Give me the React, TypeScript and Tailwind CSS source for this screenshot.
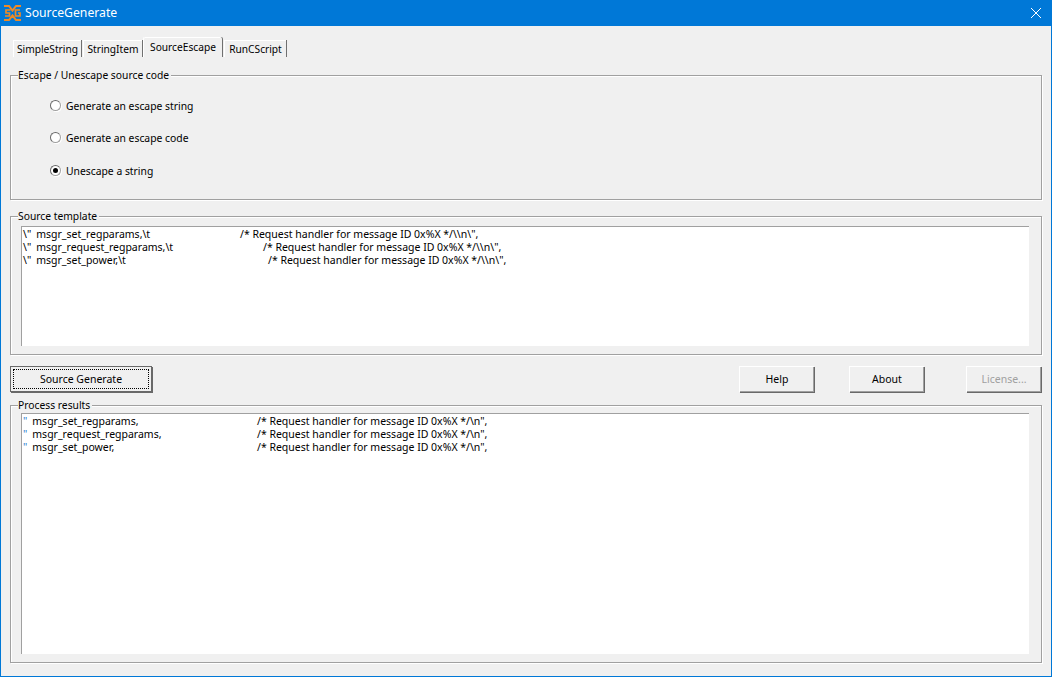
const font = { fontFamily: '"Noto Sans", sans-serif' };

function Logo() {
  return (
    <svg width="17" height="16" viewBox="0 0 17 16" fill="none" stroke="#f08a24" strokeWidth="2">
      <path d="M0 1h5l3.500 4.500L12 1h5M0 15h5l3.500-4.500L12 15h5" />
      <path d="M6.500 5H2v3h3.500v3H1M16 5h-4.500v6H16V8h-2" strokeWidth="1.700" />
    </svg>
  );
}

function Tab({ label, width, active }: { label: string; width: string; active?: boolean }) {
  if (active) {
    return (
      <div className={`z-10 -ml-px h-[20px] rounded-t-[2px] border-t border-l border-white bg-[#f0f0f0] pt-[2px] text-center shadow-[1px_0_0_#707070] ${width}`}>
        {label}
      </div>
    );
  }
  return (
    <div className={`mt-[3px] h-[17px] border-t border-l border-white bg-[#f0f0f0] pt-[1px] text-center shadow-[1px_0_0_#707070] ${width}`}>
      {label}
    </div>
  );
}

function Group({
  title,
  className,
  children,
}: {
  title: string;
  className: string;
  children: React.ReactNode;
}) {
  return (
    <div className={`relative mx-[9px] border border-[#a0a0a0] shadow-[1px_1px_0_#fff,inset_1px_1px_0_#fff] ${className}`}>
      <span className="absolute -top-[8px] left-[7px] bg-[#f0f0f0] pr-[2px] text-[10.300px] leading-[14px]">{title}</span>
      {children}
    </div>
  );
}

function Radio({ label, checked }: { label: string; checked?: boolean }) {
  return (
    <div className="flex h-[13px] items-center gap-[5px] text-[10.350px]">
      <span className="-mt-[1px] flex h-[11px] w-[11px] items-center justify-center rounded-full border border-[#a0a0a0] border-t-[#696969] border-l-[#696969] bg-white shadow-[1px_1px_0_#fff]">
        {checked && <span className="h-[5px] w-[5px] rounded-full bg-black" />}
      </span>
      <span>{label}</span>
    </div>
  );
}

function Line({ left, width, right }: { left: React.ReactNode; width: string; right: string }) {
  return (
    <div className="flex h-[13px] whitespace-pre leading-[13px]">
      <span className={width}>{left}</span>
      <span>{right}</span>
    </div>
  );
}

function Button({
  label,
  className,
  disabled,
}: {
  label: string;
  className?: string;
  disabled?: boolean;
}) {
  return (
    <button
      className={`h-[26px] w-[75px] border-t border-l border-white bg-[#f0f0f0] shadow-[1px_1px_0_#696969,inset_-1px_-1px_0_#a0a0a0] ${disabled ? "text-[#a0a0a0]" : ""} ${className ?? ""}`}
    >
      {label}
    </button>
  );
}

const quote = <span className="mr-[5px] text-[#2f7fd0]">"</span>;
const escQuote = <span className="mr-[5px]">\"</span>;

export default function App() {
  return (
    <div
      className="flex h-[677px] w-[1052px] flex-col overflow-hidden border-x border-b border-[#0078d7] bg-[#f0f0f0] text-[10.500px] leading-[14px] text-black"
      style={font}
    >
      {/* Title bar */}
      <div className="flex h-[26px] shrink-0 items-center bg-[#0078d7] pl-[3px] pr-[9px] text-[12.200px] text-white">
        <Logo />
        <span className="ml-[4px] flex-1">SourceGenerate</span>
        <svg width="12" height="12" viewBox="0 0 12 12" stroke="white" strokeWidth="1">
          <path d="M1 1l10 10M11 1L1 11" />
        </svg>
      </div>

      {/* Tabs */}
      <div className="flex h-[36px] shrink-0 items-start gap-[2px] pl-[12px] pt-[11px] text-[10.200px]">
        <Tab label="SimpleString" width="w-[68px]" />
        <Tab label="StringItem" width="w-[59px]" />
        <Tab label="SourceEscape" width="w-[79px]" active />
        <Tab label="RunCScript" width="w-[62px]" />
      </div>

      {/* Escape options */}
      <Group title="Escape / Unescape source code" className="mt-[13px] h-[125px] shrink-0">
        <div className="flex flex-col pl-[39px] pt-[23px]">
          <Radio label="Generate an escape string" />
          <div className="mt-[19px]">
            <Radio label="Generate an escape code" />
          </div>
          <div className="mt-[20px]">
            <Radio label="Unescape a string" checked />
          </div>
        </div>
      </Group>

      {/* Source template */}
      <Group title="Source template" className="mt-[16px] h-[139px] shrink-0 pl-[10px] pr-[12px] pt-[9px]">
        <div className="h-[120px] border-t border-l border-[#a0a0a0] bg-white pl-[1px] pt-[1px]">
          <Line left={<>{escQuote}msgr_set_regparams,\t</>} width="w-[217px]" right={'/* Request handler for message ID 0x%X */\\\\n\\",'} />
          <Line left={<>{escQuote}msgr_request_regparams,\t</>} width="w-[240px]" right={'/* Request handler for message ID 0x%X */\\\\n\\",'} />
          <Line left={<>{escQuote}msgr_set_power,\t</>} width="w-[245px]" right={'/* Request handler for message ID 0x%X */\\\\n\\",'} />
        </div>
      </Group>

      {/* Buttons */}
      <div className="mt-[10px] flex h-[27px] shrink-0 items-center px-[9px]">
        <button className="h-[26px] w-[142px] border border-[#696969] bg-[#f0f0f0] p-[2px] shadow-[1px_1px_0_#696969]">
          <span className="block h-full border border-dotted border-black leading-[18px]">Source Generate</span>
        </button>
        <div className="ml-auto flex pr-[1px]">
          <Button label="Help" />
          <Button label="About" className="ml-[35px]" />
          <Button label="License..." className="ml-[42px]" disabled />
        </div>
      </div>

      {/* Process results */}
      <Group title="Process results" className="mt-[13px] h-[258px] shrink-0 pl-[10px] pr-[12px] pt-[7px]">
        <div className="h-[241px] border-t border-l border-[#a0a0a0] bg-white pl-[1px] pt-[1px]">
          <Line left={<>{quote}msgr_set_regparams,</>} width="w-[234px]" right={'/* Request handler for message ID 0x%X */\\n",'} />
          <Line left={<>{quote}msgr_request_regparams,</>} width="w-[234px]" right={'/* Request handler for message ID 0x%X */\\n",'} />
          <Line left={<>{quote}msgr_set_power,</>} width="w-[234px]" right={'/* Request handler for message ID 0x%X */\\n",'} />
        </div>
      </Group>
    </div>
  );
}
